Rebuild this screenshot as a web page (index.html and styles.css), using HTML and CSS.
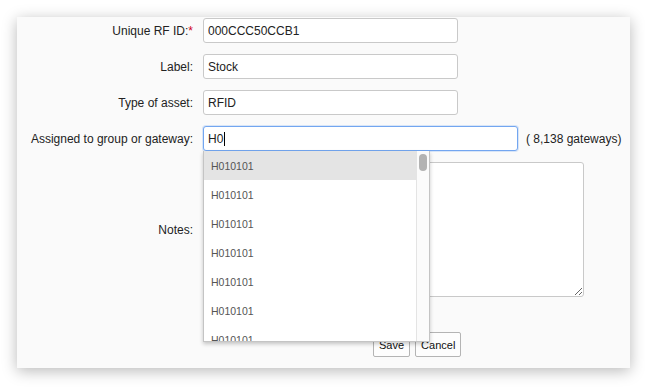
FILE: index.html
```html
<!DOCTYPE html>
<html>
<head>
<meta charset="utf-8">
<link rel="stylesheet" href="styles.css">
</head>
<body>
<div class="panel">
  <form class="form">
    <label class="lbl">Unique RF ID:<span class="req">*</span></label>
    <div class="field"><input class="inp" type="text" value="000CCC50CCB1"></div>

    <label class="lbl">Label:</label>
    <div class="field"><input class="inp" type="text" value="Stock"></div>

    <label class="lbl">Type of asset:</label>
    <div class="field"><input class="inp" type="text" value="RFID"></div>

    <label class="lbl">Assigned to group or gateway:</label>
    <div class="field field-row">
      <div class="combo">
        <div class="inp inp-focus">H0<span class="caret"></span></div>
        <div class="dropdown">
          <ul class="items">
            <li class="item active">H010101</li>
            <li class="item">H010101</li>
            <li class="item">H010101</li>
            <li class="item">H010101</li>
            <li class="item">H010101</li>
            <li class="item">H010101</li>
            <li class="item">H010101</li>
          </ul>
          <div class="scrollbar"><div class="thumb"></div></div>
        </div>
      </div>
      <span class="count">( 8,138 gateways)</span>
    </div>

    <label class="lbl">Notes:</label>
    <div class="field"><textarea class="notes"></textarea></div>

    <div class="actions">
      <button type="button" class="btn btn-save">Save</button>
      <button type="button" class="btn btn-cancel">Cancel</button>
    </div>
  </form>
</div>
</body>
</html>
```
FILE: styles.css
```css
html, body {
  margin: 0;
  padding: 0;
  background: #ffffff;
}
body {
  padding: 17px 0 19px 17px;
  min-height: 387px;
  box-sizing: border-box;
  font-family: "Liberation Sans", Arial, sans-serif;
  font-size: 12px;
  color: #222;
}
.panel {
  width: 613px;
  height: 351px;
  box-sizing: border-box;
  background: #fafafa;
  box-shadow: 0 3px 14px rgba(0, 0, 0, 0.28);
  padding-top: 1px;
}
.form {
  display: grid;
  grid-template-columns: 176px auto;
  column-gap: 10px;
  row-gap: 11px;
  align-items: center;
  margin: 0;
}
.lbl {
  text-align: right;
  color: #222;
  white-space: nowrap;
}
.req {
  color: #d0021b;
}
.field {
  display: flex;
  align-items: center;
}
.inp {
  box-sizing: border-box;
  width: 255px;
  height: 25px;
  border: 1px solid #c9c9c9;
  border-radius: 3px;
  background: #fff;
  padding: 0 4px;
  font-family: "Liberation Sans", Arial, sans-serif;
  font-size: 12px;
  color: #222;
  margin: 0;
  outline: none;
}
.field-row {
  gap: 8px;
}
.combo {
  position: relative;
}
.inp-focus {
  width: 315px;
  display: flex;
  align-items: center;
  border-color: #73a6f0;
  box-shadow: 0 0 0 1px rgba(115, 166, 240, 0.25);
}
.caret {
  display: inline-block;
  width: 1px;
  height: 14px;
  background: #000;
  margin-left: 1px;
}
.count {
  color: #222;
  white-space: nowrap;
}
.dropdown {
  position: absolute;
  left: 0;
  top: 25px;
  width: 227px;
  height: 191px;
  box-sizing: border-box;
  border: 1px solid #c4c4c4;
  border-top: none;
  background: #fff;
  box-shadow: 0 2px 4px rgba(0, 0, 0, 0.22);
  display: flex;
  z-index: 5;
  overflow: hidden;
}
.items {
  list-style: none;
  margin: 0;
  padding: 0;
  flex: 1;
  overflow: hidden;
}
.item {
  height: 29px;
  line-height: 30px;
  padding-left: 7px;
  font-size: 10.5px;
  color: #555;
}
.item.active {
  background: #e4e4e4;
}
.scrollbar {
  width: 12px;
  border-left: 1px solid #e4e4e4;
  background: #fbfbfb;
  position: relative;
}
.thumb {
  position: absolute;
  top: 3px;
  left: 2px;
  width: 8px;
  height: 17px;
  border-radius: 4px;
  background: #b3b3b3;
}
.notes {
  box-sizing: border-box;
  width: 381px;
  height: 135px;
  border: 1px solid #c9c9c9;
  border-radius: 3px;
  background: #fff;
  margin: 0;
  padding: 4px;
  font-family: "Liberation Sans", Arial, sans-serif;
  font-size: 12px;
}
.actions {
  grid-column: 2;
  margin-top: 24px;
  padding-left: 170px;
  display: flex;
  gap: 5px;
}
.btn {
  height: 25px;
  padding: 0 5px;
  border: 1px solid #b4b4b4;
  border-radius: 2px;
  background: #fdfdfd;
  font-family: "Liberation Sans", Arial, sans-serif;
  font-size: 11px;
  color: #111;
  margin: 0;
}
.btn-save {
  min-width: 36px;
}
.btn-cancel {
  min-width: 46px;
}
```
